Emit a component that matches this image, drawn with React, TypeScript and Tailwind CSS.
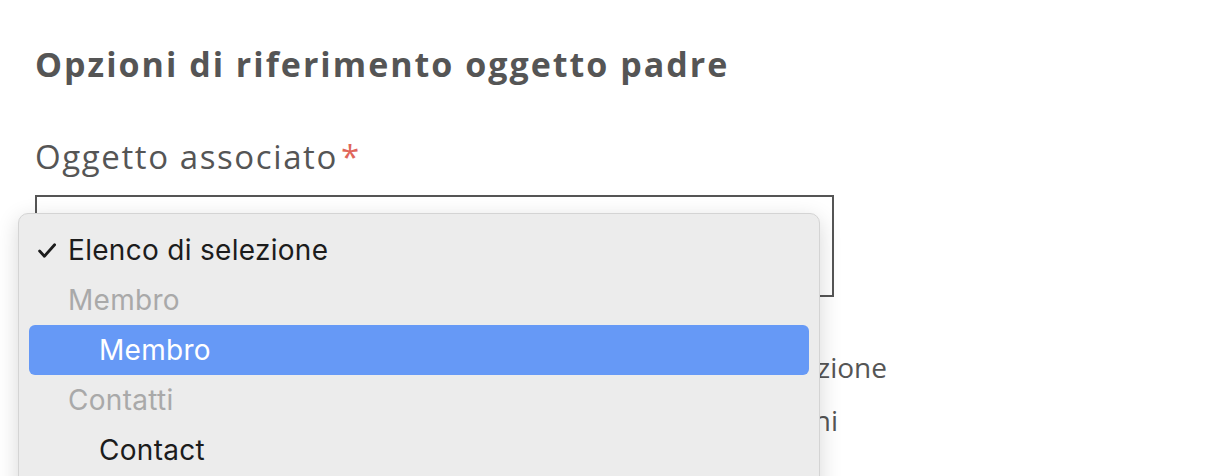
import React from "react";

const body = { fontFamily: "'Open Sans', Lato, sans-serif" };

function MenuRow({
  label,
  kind,
  checked,
}: {
  label: string;
  kind: "item" | "group" | "sub" | "active";
  checked?: boolean;
}) {
  const base = "mx-[10px] flex h-[50px] items-center rounded-[6px]";
  if (kind === "active") {
    return (
      <div className={`${base} bg-[#6699f6] pl-[70px] text-white`}>{label}</div>
    );
  }
  return (
    <div
      className={`${base} ${kind === "group" ? "pl-[39px] text-[#a9a9a9]" : kind === "sub" ? "pl-[70px] text-[#1c1c1c]" : "pl-[9px] text-[#1c1c1c]"}`}
    >
      {checked ? (
        <svg viewBox="0 0 18 15" className="mr-[12px] h-[15px] w-[18px]" fill="none">
          <path d="M1.6 8 6.4 13.2 16.6 1.8" stroke="#1c1c1c" strokeWidth="2.8" strokeLinecap="round" strokeLinejoin="round" />
        </svg>
      ) : null}
      {label}
    </div>
  );
}

export default function App() {
  return (
    <div className="relative h-[476px] w-[1228px] overflow-hidden bg-white text-[#555]" style={body}>
      <div className="px-[35px] pt-[40px]">
        <h2 className="text-[34px] font-bold leading-[48px] tracking-[2px]">Opzioni di riferimento oggetto padre</h2>
        <label className="mt-[48px] block text-[33px] font-medium leading-[42px] tracking-[1.6px]">
          Oggetto associato<span className="ml-[3px] text-[#e0665b]">*</span>
        </label>
        <div className="mt-[17px] h-[102px] w-[799px] border-2 border-[#555]" />
        <div className="mt-[44px] w-[852px] text-right text-[28px] leading-[53px]">
          <p>Impedisci la cancellazione</p>
          <p className="pr-[49px]">Consenti tutte le azioni</p>
        </div>
      </div>

      <div
        className="absolute left-[18px] top-[213px] h-[300px] w-[802px] rounded-[10px] border border-[#d4d4d4] bg-[#ececec] pt-[11px] text-[28px] tracking-[0.3px] shadow-[0_6px_22px_rgba(0,0,0,0.16)]"
        style={{ fontFamily: "Inter, 'Liberation Sans', sans-serif" }}
      >
        <MenuRow label="Elenco di selezione" kind="item" checked />
        <MenuRow label="Membro" kind="group" />
        <MenuRow label="Membro" kind="active" />
        <MenuRow label="Contatti" kind="group" />
        <MenuRow label="Contact" kind="sub" />
      </div>
    </div>
  );
}
